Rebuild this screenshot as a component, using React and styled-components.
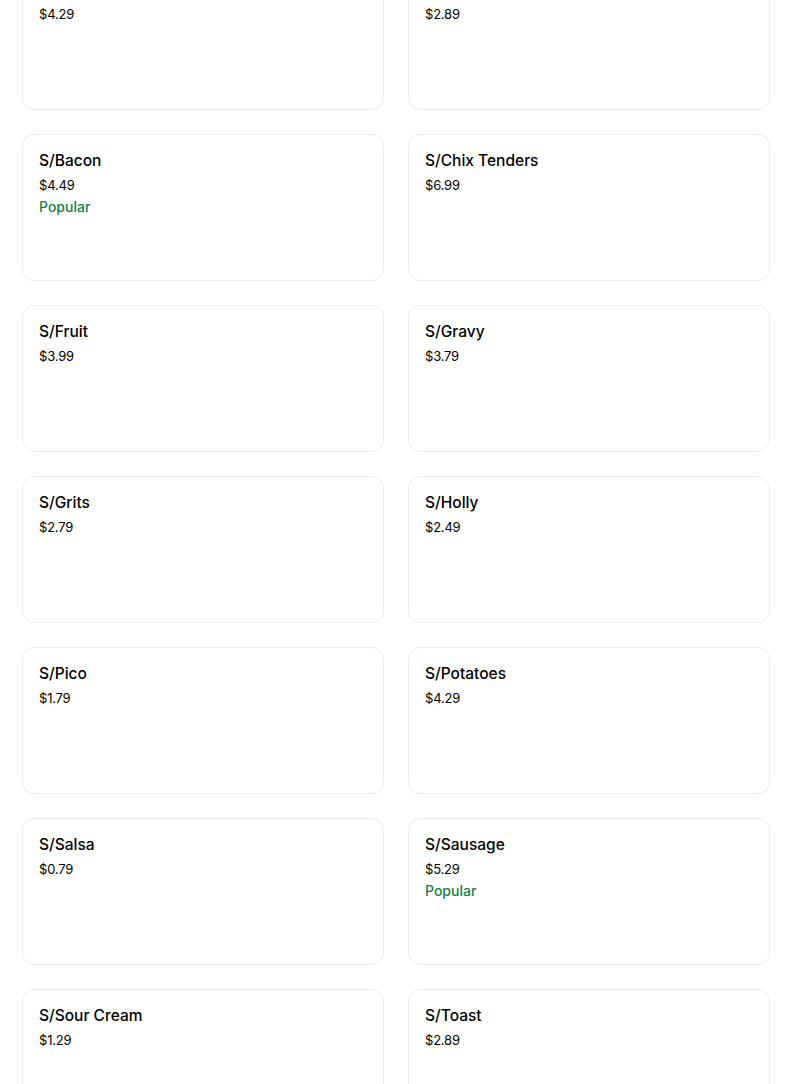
import styled, { createGlobalStyle } from "styled-components";

// the first row is scrolled past its titles, so only their prices show
const items = [
  { name: "", price: "$4.29" },
  { name: "", price: "$2.89" },
  { name: "S/Bacon", price: "$4.49", popular: true },
  { name: "S/Chix Tenders", price: "$6.99" },
  { name: "S/Fruit", price: "$3.99" },
  { name: "S/Gravy", price: "$3.79" },
  { name: "S/Grits", price: "$2.79" },
  { name: "S/Holly", price: "$2.49" },
  { name: "S/Pico", price: "$1.79" },
  { name: "S/Potatoes", price: "$4.29" },
  { name: "S/Salsa", price: "$0.79" },
  { name: "S/Sausage", price: "$5.29", popular: true },
  { name: "S/Sour Cream", price: "$1.29" },
  { name: "S/Toast", price: "$2.89" },
];

const GlobalStyle = createGlobalStyle`
  html, body {
    margin: 0;
    padding: 0;
    background: #ffffff;
    overflow: hidden;
  }
  body {
    font-family: Inter, "Noto Sans", Arial, sans-serif;
    color: #000000;
  }
`;

const App = () => {
  return (
    <Page>
      <GlobalStyle />
      <Grid>
        {items.map((item, index) => (
          <Card key={index}>
            <Name>{item.name}</Name>
            <Price>{item.price}</Price>
            {item.popular && <Tag>Popular</Tag>}
          </Card>
        ))}
      </Grid>
    </Page>
  );
};

const Page = styled.div`
  height: 1084px;
  overflow: hidden;
`;

const Grid = styled.div`
  display: grid;
  grid-template-columns: 362px 362px;
  column-gap: 24px;
  row-gap: 24px;
  padding-left: 22px;
  margin-top: -37px;
`;

const Card = styled.div`
  box-sizing: border-box;
  height: 147px;
  padding: 17px 16px 16px;
  border: 1px solid #ececec;
  border-radius: 12px;
  display: flex;
  flex-direction: column;
`;

const Name = styled.div`
  font-size: 15.5px;
  font-weight: 500;
  line-height: 18px;
  min-height: 18px;
  color: #000000;
`;

const Price = styled.div`
  font-size: 13px;
  line-height: 20px;
  margin-top: 5px;
  color: #000000;
  letter-spacing: -0.2px;
`;

const Tag = styled.div`
  font-size: 14px;
  font-weight: 500;
  line-height: 20px;
  margin-top: 2px;
  color: #0e8345;
`;

export default App;
